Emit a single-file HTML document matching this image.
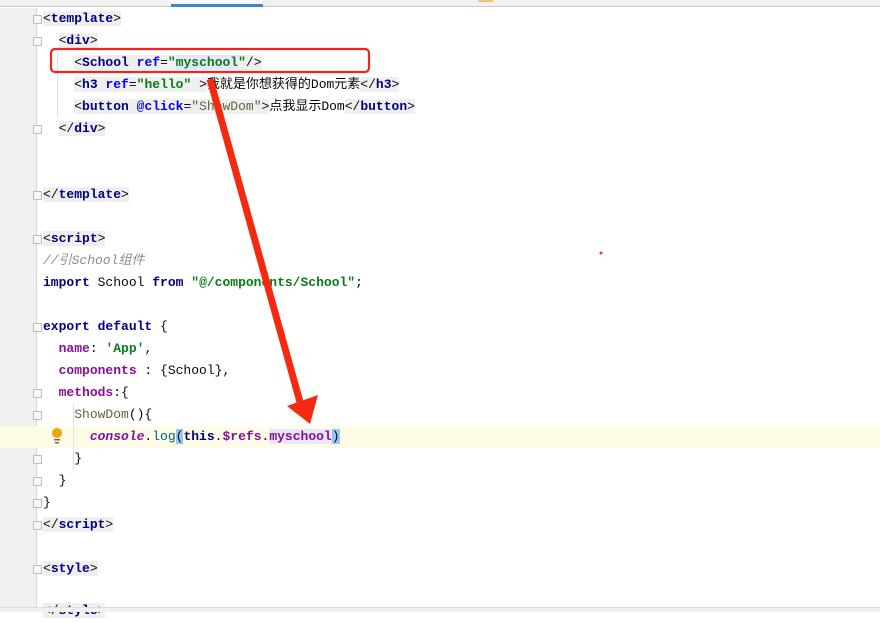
<!DOCTYPE html>
<html><head><meta charset="utf-8"><style>
*{margin:0;padding:0;box-sizing:border-box}
body{width:880px;height:612px;overflow:hidden;background:#fff;position:relative;font-family:"Liberation Mono","Noto Sans CJK SC",monospace;font-size:13px}
.tabs{position:absolute;left:0;top:0;width:880px;height:7px;background:#f0f0f0;border-bottom:1px solid #c9c9c9}
.tab{position:absolute;left:171px;top:0;width:92px;height:7px;background:#f7f7f7;border-bottom:3px solid #4083c9}
.gut{position:absolute;left:0;top:8px;width:37px;height:600px;background:#f0f0f0;border-right:1px solid #d6d6d6}
.bot{position:absolute;left:0;top:607px;width:880px;height:5px;background:#f0f0f0;border-top:1px solid #ddd}
.cur{position:absolute;left:0;top:426px;width:880px;height:22px;background:#fefbe6}
.l{position:absolute;left:43px;height:22px;line-height:22px;white-space:pre;color:#080808}
.t{background:#efefef}
.n{color:#000080;font-weight:bold}
.a{color:#0000ff;font-weight:bold}
.s{color:#067d17;font-weight:bold}
.p{color:#871094;font-weight:bold}
.c{color:#8c8c8c;font-style:italic}
.f{color:#646437}
.fold{position:absolute;left:33px;width:9px;height:9px;border:1px solid #bbb;background:#f8f8f8;border-radius:1px}
.guide{position:absolute;width:1px;background:#e0e0e0}
</style></head><body>
<div class="tabs"><div class="tab"></div><div style="position:absolute;left:478px;top:0;width:15px;height:2px;background:#f3c27a"></div></div>
<div class="gut"></div>
<div class="cur"></div>
<div class="guide" style="left:57px;top:52px;height:66px"></div>
<div class="guide" style="left:73px;top:404px;height:66px"></div>
<div class="l" style="top:8px"><span class="t">&lt;<span class="n">template</span>&gt;</span></div>
<div class="l" style="top:30px">  <span class="t">&lt;<span class="n">div</span>&gt;</span></div>
<div class="l" style="top:52px">    <span class="t">&lt;<span class="n">School</span> <span class="a">ref</span>=<span class="s">"<span style="background:#e8e8fa">myschool</span>"</span>/&gt;</span></div>
<div class="l" style="top:74px">    <span class="t">&lt;<span class="n">h3</span> <span class="a">ref</span>=<span class="s">"hello"</span> &gt;</span>我就是你想获得的Dom元素<span class="t">&lt;/<span class="n">h3</span>&gt;</span></div>
<div class="l" style="top:96px">    <span class="t">&lt;<span class="n">button</span> <span class="a">@click</span>=<span class="f">"ShowDom"</span>&gt;</span>点我显示Dom<span class="t">&lt;/<span class="n">button</span>&gt;</span></div>
<div class="l" style="top:118px">  <span class="t">&lt;/<span class="n">div</span>&gt;</span></div>
<div class="l" style="top:184px"><span class="t">&lt;/<span class="n">template</span>&gt;</span></div>
<div class="l" style="top:228px"><span class="t">&lt;<span class="n">script</span>&gt;</span></div>
<div class="l" style="top:250px"><span class="c">//引School组件</span></div>
<div class="l" style="top:272px"><span class="n">import</span> School <span class="n">from</span> <span class="s">"@/components/School"</span>;</div>
<div class="l" style="top:316px"><span class="n">export default</span> {</div>
<div class="l" style="top:338px">  <span class="p">name</span>: <span class="s">'App'</span>,</div>
<div class="l" style="top:360px">  <span class="p">components</span> : {School},</div>
<div class="l" style="top:382px">  <span class="p">methods</span>:{</div>
<div class="l" style="top:404px">    <span class="f">ShowDom</span>(){</div>
<div class="l" style="top:426px">      <span style="color:#871094;font-style:italic;font-weight:bold">console</span>.<span style="color:#00627a">log</span><span style="background:#93c9f7">(</span><span class="n">this</span>.<span class="p">$refs</span>.<span class="p" style="background:#e8e6fa">myschool</span><span style="background:#93c9f7">)</span></div>
<div class="l" style="top:448px">    }</div>
<div class="l" style="top:470px">  }</div>
<div class="l" style="top:492px">}</div>
<div class="l" style="top:514px"><span class="t">&lt;/<span class="n">script</span>&gt;</span></div>
<div class="l" style="top:558px"><span class="t">&lt;<span class="n">style</span>&gt;</span></div>
<div class="l" style="top:600px"><span class="t">&lt;/<span class="n">style</span>&gt;</span></div>
<div class="fold" style="top:15px"></div><div class="fold" style="top:37px"></div><div class="fold" style="top:125px"></div>
<div class="fold" style="top:191px"></div><div class="fold" style="top:235px"></div><div class="fold" style="top:323px"></div>
<div class="fold" style="top:389px"></div><div class="fold" style="top:411px"></div><div class="fold" style="top:455px"></div>
<div class="fold" style="top:477px"></div><div class="fold" style="top:499px"></div><div class="fold" style="top:521px"></div>
<div class="fold" style="top:565px"></div>
<svg style="position:absolute;left:0;top:0" width="880" height="612">
<rect x="51" y="49" width="318" height="23" rx="4" fill="none" stroke="#f3231a" stroke-width="2.2"/>
<line x1="210" y1="79" x2="300" y2="402" stroke="#f42a10" stroke-width="7"/>
<polygon points="287,406 318,395 310,424" fill="#f42a10"/>
<circle cx="57" cy="433" r="5" fill="#f0a30a"/>
<rect x="54" y="439" width="6" height="1.5" fill="#666"/><rect x="55" y="442" width="4" height="1.5" fill="#666"/>
<circle cx="601" cy="253" r="1.5" fill="#e33"/>
</svg>
<div class="bot"></div>
</body></html>
